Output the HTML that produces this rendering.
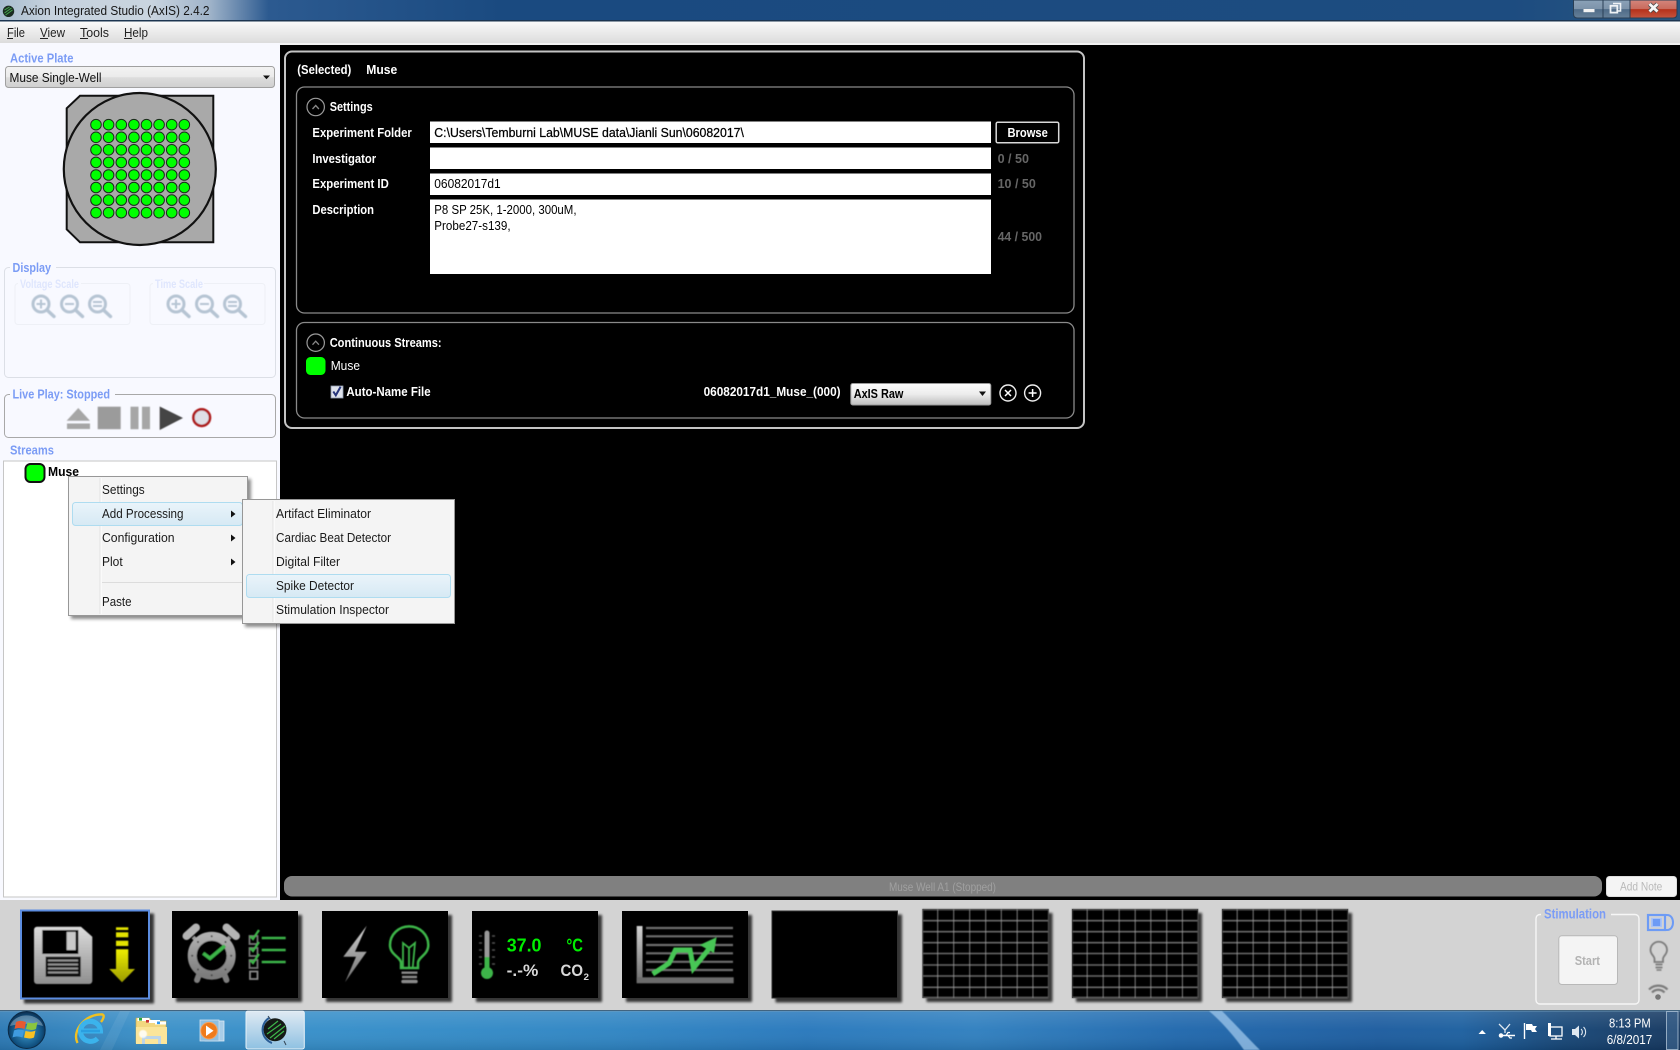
<!DOCTYPE html>
<html><head><meta charset="utf-8"><title>Axion Integrated Studio (AxIS) 2.4.2</title>
<style>
html,body{margin:0;padding:0;background:#000;width:1680px;height:1050px;overflow:hidden}
svg{display:block}
text{font-family:"Liberation Sans",Arial,sans-serif;font-size:13px;white-space:pre}
.b{font-weight:bold}
.w{fill:#fff;font-weight:bold}
.h{fill:#7b9cf5;font-weight:bold}
</style></head><body>
<svg width="1680" height="1050" viewBox="0 0 1680 1050" xmlns="http://www.w3.org/2000/svg">
<defs>
<linearGradient id="tb" x1="0" x2="1" y1="0" y2="0">
<stop offset="0" stop-color="#a8bccf"/><stop offset=".03" stop-color="#c6d2dd"/><stop offset=".09" stop-color="#c9d4df"/><stop offset=".125" stop-color="#9fb3c9"/><stop offset=".16" stop-color="#2c5a90"/><stop offset=".3" stop-color="#1a4a80"/><stop offset=".9" stop-color="#1d4c80"/><stop offset="1" stop-color="#29567f"/>
</linearGradient>
<linearGradient id="mn" x1="0" x2="0" y1="0" y2="1"><stop offset="0" stop-color="#fbfbfb"/><stop offset=".2" stop-color="#f3f3f3"/><stop offset="1" stop-color="#dcdcdc"/></linearGradient>
<linearGradient id="cb" x1="0" x2="0" y1="0" y2="1"><stop offset="0" stop-color="#f3f3f3"/><stop offset=".5" stop-color="#ebebeb"/><stop offset=".52" stop-color="#dddddd"/><stop offset="1" stop-color="#cfcfcf"/></linearGradient>
<linearGradient id="hl" x1="0" x2="0" y1="0" y2="1"><stop offset="0" stop-color="#eaf4fa"/><stop offset="1" stop-color="#d6e9f4"/></linearGradient>
<linearGradient id="task" x1="0" x2="1" y1="0" y2="0">
<stop offset="0" stop-color="#2a78b4"/><stop offset=".09" stop-color="#3a90c8"/><stop offset=".2" stop-color="#358ec9"/><stop offset=".36" stop-color="#2f85c3"/><stop offset=".48" stop-color="#2878bc"/><stop offset=".58" stop-color="#2f7fbf"/><stop offset=".7" stop-color="#2068ad"/><stop offset=".82" stop-color="#1c5c9f"/><stop offset=".87" stop-color="#1c5f9f"/><stop offset=".93" stop-color="#174778"/><stop offset="1" stop-color="#15375f"/>
</linearGradient>
<linearGradient id="sheen" x1="0" x2="0" y1="0" y2="1"><stop offset="0" stop-color="#fff" stop-opacity=".14"/><stop offset=".5" stop-color="#fff" stop-opacity=".03"/><stop offset="1" stop-color="#000" stop-opacity=".1"/></linearGradient>
<linearGradient id="tbtn" x1="0" x2="0" y1="0" y2="1"><stop offset="0" stop-color="#dfeaf3"/><stop offset="1" stop-color="#8fc1e2"/></linearGradient>
<linearGradient id="minb" x1="0" x2="0" y1="0" y2="1"><stop offset="0" stop-color="#8ba2b8"/><stop offset=".5" stop-color="#7d93aa"/><stop offset=".52" stop-color="#4f6b88"/><stop offset="1" stop-color="#678199"/></linearGradient>
<linearGradient id="clsb" x1="0" x2="0" y1="0" y2="1"><stop offset="0" stop-color="#d4867c"/><stop offset=".5" stop-color="#c96a5c"/><stop offset=".52" stop-color="#b5301a"/><stop offset="1" stop-color="#c5553f"/></linearGradient>
<linearGradient id="fl" x1="0" x2="0" y1="0" y2="1"><stop offset="0" stop-color="#dcdcdc"/><stop offset="1" stop-color="#8f8f8f"/></linearGradient>
<linearGradient id="ar" x1="0" x2="0" y1="0" y2="1"><stop offset="0" stop-color="#eeee00"/><stop offset="1" stop-color="#9c9c00"/></linearGradient>
<linearGradient id="gy" x1="0" x2="0" y1="0" y2="1"><stop offset="0" stop-color="#d2d2d2"/><stop offset="1" stop-color="#6e6e6e"/></linearGradient>
<linearGradient id="rg" x1="0" x2="0" y1="0" y2="1"><stop offset="0" stop-color="#b0b0b0"/><stop offset="1" stop-color="#7c7c7c"/></linearGradient>
<linearGradient id="axis" x1="0" x2="0" y1="0" y2="1"><stop offset="0" stop-color="#fdfdfd"/><stop offset=".5" stop-color="#ececec"/><stop offset="1" stop-color="#bdbdbd"/></linearGradient>
<radialGradient id="orb" cx=".5" cy=".55" r=".55"><stop offset="0" stop-color="#3d9bd0"/><stop offset=".75" stop-color="#10507f"/><stop offset="1" stop-color="#0c2c4c"/></radialGradient>
<filter id="sh" x="-10%" y="-10%" width="125%" height="125%"><feGaussianBlur in="SourceAlpha" stdDeviation="1.2"/><feOffset dx="4" dy="4"/><feComponentTransfer><feFuncA type="linear" slope=".75"/></feComponentTransfer><feMerge><feMergeNode/><feMergeNode in="SourceGraphic"/></feMerge></filter>
<filter id="msh" x="-5%" y="-5%" width="115%" height="115%"><feGaussianBlur in="SourceAlpha" stdDeviation="1.5"/><feOffset dx="3" dy="3"/><feComponentTransfer><feFuncA type="linear" slope=".45"/></feComponentTransfer><feMerge><feMergeNode/><feMergeNode in="SourceGraphic"/></feMerge></filter>
<filter id="bl"><feGaussianBlur stdDeviation=".5"/></filter>
<filter id="bl2" x="-10%" y="-10%" width="120%" height="120%"><feGaussianBlur stdDeviation=".4"/></filter>
<g id="row" fill="#00ff00" stroke="#1c2a1c" stroke-width="1"><circle cx="96" r="5.3"/><circle cx="108.6" r="5.3"/><circle cx="121.3" r="5.3"/><circle cx="133.9" r="5.3"/><circle cx="146.5" r="5.3"/><circle cx="159.1" r="5.3"/><circle cx="171.7" r="5.3"/><circle cx="184.3" r="5.3"/></g>
<g id="grid">
<rect x="922.5" y="909" width="126" height="89" fill="#000" filter="url(#sh)"/>
<g filter="url(#bl2)">
<path d="M922.5 909.5h126M922.5 920.7h126M922.5 931.7h126M922.5 942.7h126M922.5 953.5h126M922.5 965h126M922.5 976h126M922.5 987.3h126M922.5 997.5h126" stroke="#6a6a6a" stroke-width="1.6" fill="none"/>
<path d="M937.7 909v89M953.7 909v89M969.7 909v89M985.7 909v89M1001.3 909v89M1017.2 909v89M1032.9 909v89" stroke="#9a9a9a" stroke-width=".8" fill="none"/>
<path d="M922.8 909v89M1048.4 909v89" stroke="#555" stroke-width="1" fill="none"/>
</g>
</g>
<g id="zm" fill="none" stroke="#b6c4d3"><circle cx="0" cy="0" r="8" stroke-width="3"/><path d="M6 6l7 6.5" stroke-width="3.4" stroke-linecap="round"/></g>
</defs>

<rect width="1680" height="1050" fill="#000"/>
<!-- title bar -->
<rect width="1680" height="20" fill="url(#tb)"/>
<rect y="20" width="1680" height="1.5" fill="#1c3550"/>
<circle cx="8.5" cy="11.3" r="5.7" fill="#1b2b22"/><path d="M4.5 13l7-5M5.5 15l7-5M4.5 10l5-3" stroke="#44a84c" stroke-width="1"/>
<text x="21" y="15" textLength="188.5" lengthAdjust="spacingAndGlyphs" fill="#161616">Axion Integrated Studio (AxIS) 2.4.2</text>
<!-- window buttons -->
<path d="M1573.5 0v14q0 4 4 4h29V0z" fill="url(#minb)" stroke="#2a3f55"/>
<rect x="1603" y="0" width="27" height="18" fill="url(#minb)" stroke="#2a3f55"/>
<path d="M1630 0v18h43q4 0 4-4V0z" fill="url(#clsb)" stroke="#2a3f55"/>
<rect x="1583.5" y="9" width="11" height="3.2" fill="#f2f2f2"/>
<path d="M1613 3.5h7.5v7.5h-2.5" fill="none" stroke="#eef2f5" stroke-width="1.6"/><rect x="1610.5" y="5.8" width="6.8" height="6.8" fill="none" stroke="#eef2f5" stroke-width="1.8"/>
<path d="M1649.5 4l8 7.5M1657.5 4l-8 7.5" stroke="#4a4a4a" stroke-width="4.4"/>
<path d="M1649.5 4l8 7.5M1657.5 4l-8 7.5" stroke="#f6f6f6" stroke-width="2.8"/>
<!-- menu -->
<rect y="21.5" width="1680" height="22" fill="url(#mn)"/>
<g fill="#222">
<text x="7" y="37" textLength="18" lengthAdjust="spacingAndGlyphs">File</text>
<text x="40" y="37" textLength="25" lengthAdjust="spacingAndGlyphs">View</text>
<text x="80" y="37" textLength="29" lengthAdjust="spacingAndGlyphs">Tools</text>
<text x="124" y="37" textLength="24" lengthAdjust="spacingAndGlyphs">Help</text>
</g>
<path d="M7 38.5h6M40 38.5h8M80 38.5h8M124 38.5h8" stroke="#222" stroke-width="1"/>
<rect y="43" width="1680" height="2" fill="#f2f2f2"/>
<!-- left panel -->
<rect y="43" width="280" height="857" fill="#f8f9ff"/>
<text class="h" x="10" y="62.5" textLength="63.5" lengthAdjust="spacingAndGlyphs">Active Plate</text>
<rect x="5.5" y="66.5" width="269" height="21" rx="3" fill="url(#cb)" stroke="#a0a0a0"/>
<text x="9.5" y="82" textLength="92" lengthAdjust="spacingAndGlyphs" fill="#111">Muse Single-Well</text>
<path d="M263 75.5h7l-3.5 3.7z" fill="#111"/>
<!-- plate -->
<path d="M80 95.8h133.3v146.5H80l-13.3-13v-121z" fill="#a9a9a9" stroke="#111" stroke-width="2"/>
<circle cx="139.8" cy="169" r="76" fill="#a9a9a9" stroke="#111" stroke-width="2.2"/>
<use href="#row" y="124.7"/><use href="#row" y="137.3"/><use href="#row" y="149.8"/><use href="#row" y="162.4"/><use href="#row" y="175"/><use href="#row" y="187.5"/><use href="#row" y="200.1"/><use href="#row" y="212.7"/>
<!-- display -->
<rect x="4.5" y="267.5" width="271" height="110" rx="4" fill="none" stroke="#dcdfe6"/>
<rect x="10" y="262" width="46" height="10" fill="#f8f9ff"/>
<text class="h" x="12.5" y="272" textLength="38.5" lengthAdjust="spacingAndGlyphs">Display</text>
<rect x="15" y="283.5" width="115" height="41" rx="3" fill="none" stroke="#eef0f6"/>
<rect x="150" y="283.5" width="115" height="41" rx="3" fill="none" stroke="#eef0f6"/>
<rect x="18" y="279" width="63" height="9" fill="#f8f9ff"/><rect x="153" y="279" width="51" height="9" fill="#f8f9ff"/>
<text x="20" y="288" class="b" style="font-size:11.5px" fill="#dfe6fd" textLength="59" lengthAdjust="spacingAndGlyphs">Voltage Scale</text>
<text x="155" y="288" class="b" style="font-size:11.5px" fill="#dfe6fd" textLength="48" lengthAdjust="spacingAndGlyphs">Time Scale</text>
<g filter="url(#bl2)">
<use href="#zm" x="41" y="304"/><use href="#zm" x="69.5" y="304"/><use href="#zm" x="97.5" y="304"/>
<use href="#zm" x="176" y="304"/><use href="#zm" x="204.5" y="304"/><use href="#zm" x="232.5" y="304"/>
<path d="M36.5 304h9M41 299.5v9M65 304h9M93 302h9M93 306h9M171.5 304h9M176 299.5v9M200 304h9M228 302h9M228 306h9" stroke="#b6c4d3" stroke-width="2" fill="none"/>
</g>
<!-- live play -->
<rect x="4.5" y="394.5" width="271" height="43" rx="4" fill="none" stroke="#a8a8a8"/>
<rect x="10" y="389" width="105" height="10" fill="#f8f9ff"/>
<text class="h" x="12.5" y="398.5" textLength="97.5" lengthAdjust="spacingAndGlyphs">Live Play: Stopped</text>
<g filter="url(#bl)">
<path d="M78.3 408l11.7 12.8h-23.4z" fill="#a6a6a6"/><rect x="67" y="423.5" width="23" height="5.5" fill="#a6a6a6"/>
<rect x="97.7" y="406.7" width="23" height="22.5" fill="#9b9b9b"/>
<rect x="130.5" y="406.7" width="8" height="22.5" fill="#a6a6a6"/><rect x="142" y="406.7" width="8" height="22.5" fill="#a6a6a6"/>
<path d="M159.7 406.5L183 418l-23.3 12z" fill="#444"/>
<circle cx="201.7" cy="417.6" r="8.3" fill="#dfdfe6" stroke="#ad1c1c" stroke-width="2.6"/>
</g>
<text class="h" x="10" y="454.5" textLength="44" lengthAdjust="spacingAndGlyphs">Streams</text>
<!-- tree -->
<rect x="3.5" y="461" width="273" height="436" fill="#fff" stroke="#c6c6c6"/>
<rect x="25.5" y="464" width="19" height="18" rx="5" fill="#00ff00" stroke="#111" stroke-width="2"/>
<text x="48" y="476" class="b" fill="#000" textLength="31" lengthAdjust="spacingAndGlyphs">Muse</text>
<!-- context menu 1 -->
<g filter="url(#msh)"><rect x="68.5" y="476.5" width="179" height="139" fill="#f4f4f4" stroke="#979797"/></g>
<path d="M100 478v136" stroke="#e2e2e2"/><path d="M101 478v136" stroke="#fff"/>
<rect x="72.5" y="502.5" width="170" height="23" rx="3" fill="url(#hl)" stroke="#aedcf0"/>
<path d="M102 582.5h141" stroke="#dcdcdc"/>
<g fill="#1a1a1a">
<text x="102" y="494" textLength="42.7" lengthAdjust="spacingAndGlyphs">Settings</text>
<text x="102" y="518" textLength="81.5" lengthAdjust="spacingAndGlyphs">Add Processing</text>
<text x="102" y="542" textLength="72.5" lengthAdjust="spacingAndGlyphs">Configuration</text>
<text x="102" y="566" textLength="20.7" lengthAdjust="spacingAndGlyphs">Plot</text>
<text x="102" y="606" textLength="29.5" lengthAdjust="spacingAndGlyphs">Paste</text>
</g>
<path d="M231 510.5l4.5 3.5-4.5 3.5zM231 534.5l4.5 3.5-4.5 3.5zM231 558.5l4.5 3.5-4.5 3.5z" fill="#111"/>
<!-- submenu -->
<g filter="url(#msh)"><rect x="242.5" y="499.5" width="212" height="124" fill="#f4f4f4" stroke="#979797"/></g>
<path d="M273 501v121" stroke="#e2e2e2"/><path d="M274 501v121" stroke="#fff"/>
<rect x="246.5" y="574.5" width="204" height="23" rx="3" fill="url(#hl)" stroke="#aedcf0"/>
<g fill="#1a1a1a">
<text x="276" y="518" textLength="95" lengthAdjust="spacingAndGlyphs">Artifact Eliminator</text>
<text x="276" y="542" textLength="115" lengthAdjust="spacingAndGlyphs">Cardiac Beat Detector</text>
<text x="276" y="566" textLength="64" lengthAdjust="spacingAndGlyphs">Digital Filter</text>
<text x="276" y="590" textLength="78" lengthAdjust="spacingAndGlyphs">Spike Detector</text>
<text x="276" y="614" textLength="113" lengthAdjust="spacingAndGlyphs">Stimulation Inspector</text>
</g>
<!-- main panel -->
<rect x="285" y="51.5" width="799" height="376.5" rx="7" fill="#000" stroke="#c4c4c4" stroke-width="2"/>
<text class="w" x="297.3" y="74" textLength="54" lengthAdjust="spacingAndGlyphs">(Selected)</text>
<text class="w" x="366.3" y="74" textLength="31" lengthAdjust="spacingAndGlyphs">Muse</text>
<rect x="296.5" y="87" width="777.5" height="226" rx="8" fill="none" stroke="#8a8a8a" stroke-width="1.3"/>
<rect x="296.5" y="322.5" width="777.5" height="95.5" rx="8" fill="none" stroke="#8a8a8a" stroke-width="1.3"/>
<circle cx="315.7" cy="107" r="8.7" fill="none" stroke="#9a9a9a" stroke-width="1.2"/><path d="M312.5 109l3.2-3.5 3.2 3.5" fill="none" stroke="#888" stroke-width="1.3"/>
<circle cx="315.7" cy="342.7" r="8.7" fill="none" stroke="#9a9a9a" stroke-width="1.2"/><path d="M312.5 344.7l3.2-3.5 3.2 3.5" fill="none" stroke="#888" stroke-width="1.3"/>
<text class="w" x="329.7" y="111" textLength="43" lengthAdjust="spacingAndGlyphs">Settings</text>
<text class="w" x="312.4" y="137" textLength="99.4" lengthAdjust="spacingAndGlyphs">Experiment Folder</text>
<text class="w" x="312.4" y="163" textLength="63.8" lengthAdjust="spacingAndGlyphs">Investigator</text>
<text class="w" x="312.4" y="188" textLength="76.4" lengthAdjust="spacingAndGlyphs">Experiment ID</text>
<text class="w" x="312.4" y="214" textLength="61.6" lengthAdjust="spacingAndGlyphs">Description</text>
<rect x="430" y="121.5" width="561" height="21.5" fill="#fff"/>
<rect x="430" y="147.5" width="561" height="21.5" fill="#fff"/>
<rect x="430" y="173.5" width="561" height="21.5" fill="#fff"/>
<rect x="430" y="199.5" width="561" height="74.5" fill="#fff"/>
<text x="434.3" y="137" fill="#000" stroke="#000" stroke-width=".25" textLength="309.6" lengthAdjust="spacingAndGlyphs">C:\Users\Temburni Lab\MUSE data\Jianli Sun\06082017\</text>
<text x="434.3" y="188" fill="#000" textLength="66.4" lengthAdjust="spacingAndGlyphs">06082017d1</text>
<text x="434.3" y="214" fill="#000" textLength="142.2" lengthAdjust="spacingAndGlyphs">P8 SP 25K, 1-2000, 300uM,</text>
<text x="434.3" y="230" fill="#000" textLength="76.3" lengthAdjust="spacingAndGlyphs">Probe27-s139,</text>
<rect x="996.2" y="122.2" width="62.5" height="20.6" rx="1.5" fill="#000" stroke="#d8d8d8" stroke-width="1.5"/>
<text class="w" x="1007.5" y="137" textLength="40.3" lengthAdjust="spacingAndGlyphs">Browse</text>
<text x="997.6" y="163" textLength="31.4" lengthAdjust="spacingAndGlyphs" fill="#666" font-weight="bold">0 / 50</text>
<text x="997.6" y="188" textLength="38.2" lengthAdjust="spacingAndGlyphs" fill="#666" font-weight="bold">10 / 50</text>
<text x="997.6" y="241" textLength="44.4" lengthAdjust="spacingAndGlyphs" fill="#666" font-weight="bold">44 / 500</text>
<text class="w" x="329.7" y="347" textLength="111.9" lengthAdjust="spacingAndGlyphs">Continuous Streams:</text>
<rect x="306" y="357" width="19.5" height="18" rx="4.5" fill="#00ff00"/>
<text x="330.7" y="370" fill="#fff" textLength="29.3" lengthAdjust="spacingAndGlyphs">Muse</text>
<rect x="331" y="386" width="12" height="12" fill="#dfe3ec" stroke="#8f9ab0" stroke-width=".8"/>
<path d="M333.3 391.5l2.5 3.8 4.8-8.5" fill="none" stroke="#28367c" stroke-width="2"/>
<text class="w" x="346.4" y="396" textLength="84.2" lengthAdjust="spacingAndGlyphs">Auto-Name File</text>
<text class="w" x="703.6" y="396" textLength="137" lengthAdjust="spacingAndGlyphs">06082017d1_Muse_(000)</text>
<rect x="850.8" y="383.5" width="140" height="21.5" rx="2" fill="url(#axis)" stroke="#999"/>
<text x="853.7" y="398" fill="#000" font-weight="bold" textLength="49.7" lengthAdjust="spacingAndGlyphs">AxIS Raw</text>
<path d="M979 391.5h7l-3.5 4.5z" fill="#111"/>
<circle cx="1008" cy="393" r="8" fill="none" stroke="#eee" stroke-width="1.4"/><path d="M1005 390l6 6M1011 390l-6 6" stroke="#fff" stroke-width="1.5"/>
<circle cx="1032.6" cy="393" r="8" fill="none" stroke="#eee" stroke-width="1.4"/><path d="M1032.6 389v8M1028.6 393h8" stroke="#fff" stroke-width="1.5"/>
<!-- status -->
<rect x="284" y="876" width="1318" height="20.5" rx="8" fill="#808080"/>
<text x="889" y="891" style="font-size:12px" fill="#a0a0a0" textLength="107" lengthAdjust="spacingAndGlyphs">Muse Well A1 (Stopped)</text>
<rect x="1606.5" y="876.5" width="70" height="20" rx="3" fill="#f4f4f4" stroke="#dedede"/>
<text x="1620" y="890.5" style="font-size:12px" fill="#b9b9b9" textLength="42.3" lengthAdjust="spacingAndGlyphs">Add Note</text>
<!-- bottom bar -->
<rect y="900" width="1680" height="110" fill="#d3d3d3"/>
<!-- thumb 1 -->
<g filter="url(#sh)"><rect x="21" y="910.5" width="128" height="88" fill="#000" stroke="#5b8de0" stroke-width="2"/></g>
<g filter="url(#bl2)">
<path d="M37 926.7h44l11.3 10v44.3a3 3 0 0 1-3 3h-52.3a3 3 0 0 1-3-3v-51.3a3 3 0 0 1 3-3z" fill="url(#fl)"/>
<rect x="42.3" y="930" width="36" height="24" fill="#000"/><rect x="66.7" y="932" width="9" height="18" fill="#c9c9c9"/>
<rect x="45.7" y="956.7" width="35" height="20" fill="#111"/>
<path d="M48 960.5h30M48 964.5h30M48 968.5h30M48 972.5h30" stroke="#9a9a9a" stroke-width="1.8"/>
<rect x="116" y="927.3" width="12.3" height="2.7" fill="#e3e300"/><rect x="116" y="932.3" width="12.3" height="5" fill="#e3e300"/><rect x="116" y="940.7" width="12.3" height="5.3" fill="#e3e300"/>
<path d="M116 949.3h12.3V969h6.7l-13 13.3L109.3 969H116z" fill="url(#ar)"/>
</g>
<!-- thumb 2: alarm clock + checklist -->
<rect x="172" y="911" width="126" height="87" fill="#000" filter="url(#sh)"/>
<g filter="url(#bl2)">
<path d="M186.5 936l9.5-8.500M236 936l-9.500-8.500" stroke="#b4b4b4" stroke-width="8" stroke-linecap="round"/>
<path d="M193 937l3 3M230 937l-3 3" stroke="#999" stroke-width="4"/>
<path d="M198.500 976l-1.500 4M225 976l1.500 4" stroke="#7e7e7e" stroke-width="6" stroke-linecap="round"/>
<circle cx="211.7" cy="955.7" r="19.500" fill="#000" stroke="url(#rg)" stroke-width="9"/>
<g fill="#444"><circle cx="211.700" cy="936.200" r="1"/><circle cx="211.700" cy="975.200" r="1"/><circle cx="192.200" cy="955.700" r="1"/><circle cx="231.200" cy="955.700" r="1"/><circle cx="198" cy="942" r="1"/><circle cx="225.500" cy="942" r="1"/><circle cx="198" cy="969.500" r="1"/><circle cx="225.500" cy="969.500" r="1"/></g>
<path d="M203.300 953.300l6.700 5 15-12.600" fill="none" stroke="#3db54a" stroke-width="3.400"/>
<g fill="none" stroke="#777" stroke-width="1.800">
<rect x="249.500" y="936" width="8" height="8"/><rect x="249.500" y="948" width="8" height="8"/><rect x="249.500" y="960" width="8" height="8"/><rect x="250" y="971.500" width="7.500" height="7.500" stroke="#8a8a8a"/>
</g>
<path d="M250 936l3 3 6-9M250 948l3 3 6-9M250 960l3 3 6-9" fill="none" stroke="#3db54a" stroke-width="2.300"/>
<path d="M261.700 938h24M261.700 950h24M261.700 962h24" stroke="#3db54a" stroke-width="2.500"/>
</g>
<!-- thumb 3 -->
<rect x="322" y="911" width="126" height="87" fill="#000" filter="url(#sh)"/>
<g filter="url(#bl2)">
<path d="M366.700 925.700l-23.400 31h12.700L345 982.300l21.700-30.600H355z" fill="url(#gy)"/>
<path d="M401 968v-5c0-6-11-8-11-18a19 18.500 0 0 1 38.300 0c0 10-10.300 12-10.300 18v5z" fill="none" stroke="#3db54a" stroke-width="2.500"/>
<path d="M403 968v-25l6 5 6-5-2.300 25M409 948v20" fill="none" stroke="#3db54a" stroke-width="1.800"/>
<path d="M401.500 972.700h16M402 977h15" stroke="#8a8a8a" stroke-width="2.400"/><path d="M403 981.500h13" stroke="#8a8a8a" stroke-width="3.500" stroke-linecap="round"/>
</g>
<!-- thumb 4 -->
<rect x="472" y="911" width="126" height="87" fill="#000" filter="url(#sh)"/>
<g filter="url(#bl2)">
<path d="M487 964.500V933" stroke="#999" stroke-width="5" stroke-linecap="round"/>
<path d="M487 968v-11" stroke="#3db54a" stroke-width="5"/><circle cx="487" cy="973" r="6" fill="#3db54a"/>
<path d="M479 936h3M492 936h3M479 943h3M492 943h3M479 950h3M492 950h3M479 957h3M492 957h3M479 964h3M492 964h3" stroke="#555" stroke-width="1.500"/>
</g>
<text x="506.700" y="951.500" class="b" style="font-size:18px" fill="#00ee00" textLength="34.800" lengthAdjust="spacingAndGlyphs">37.0</text>
<text x="566.400" y="951.500" class="b" style="font-size:18px" fill="#00ee00" textLength="16.600" lengthAdjust="spacingAndGlyphs">°C</text>
<text x="506.700" y="976" class="b" style="font-size:17px" fill="#d8d8d8" textLength="31.600" lengthAdjust="spacingAndGlyphs">-.-%</text>
<text x="560.500" y="976" class="b" style="font-size:17px" fill="#d8d8d8" textLength="22.500" lengthAdjust="spacingAndGlyphs">CO</text>
<text x="583.500" y="980" class="b" style="font-size:9px" fill="#d8d8d8" textLength="5.500" lengthAdjust="spacingAndGlyphs">2</text>
<!-- thumb 5: chart -->
<rect x="622" y="911" width="126" height="87" fill="#000" filter="url(#sh)"/>
<g filter="url(#bl2)">
<rect x="636.700" y="926" width="5.800" height="57" fill="url(#gy)"/>
<rect x="636.700" y="977.300" width="97" height="6" fill="#6c6c6c"/>
<path d="M646 928h87M646 936.300h87M646 945h87M646 953.300h87M646 961.800h87M646 970h87" stroke="#6e6e6e" stroke-width="2.200"/>
<path d="M652.700 974L669 963.300 675.400 950H690l3.400 18.300 16-20" fill="none" stroke="#46c654" stroke-width="5"/>
<path d="M716.600 937.300L699.700 945 714 953z" fill="#46c654"/>
</g>
<!-- thumb 6 -->
<rect x="772" y="911" width="125.500" height="87" fill="#000" stroke="#333" filter="url(#sh)"/>
<!-- grids -->
<use href="#grid"/><use href="#grid" x="149.500"/><use href="#grid" x="299.500"/>
<!-- stimulation -->
<rect x="1536" y="914.500" width="103" height="89.500" rx="4" fill="none" stroke="#f6f6f6" stroke-width="1.400"/>
<rect x="1541" y="910" width="70" height="9" fill="#d3d3d3"/>
<text class="h" x="1544" y="918.500" textLength="62" lengthAdjust="spacingAndGlyphs" style="font-size:13.500px">Stimulation</text>
<rect x="1558.800" y="935.800" width="58.700" height="48.700" rx="3" fill="#f4f4f4" stroke="#b8b8b8"/>
<text x="1574.700" y="965" class="b" fill="#b3b3b3" textLength="25.300" lengthAdjust="spacingAndGlyphs">Start</text>
<!-- right icons -->
<path d="M1665 915h2c4 0 6 3.500 6 7.500s-2 7.500-6 7.500h-2" fill="none" stroke="#6d9bf5" stroke-width="2"/>
<rect x="1648" y="915" width="17" height="15" fill="none" stroke="#6d9bf5" stroke-width="2.200"/>
<rect x="1651" y="917.800" width="11" height="9.400" fill="#a9c3f8"/><rect x="1652.800" y="919" width="7.400" height="7" fill="#6d9bf5"/>
<g fill="none" stroke="#7b7b7b" filter="url(#bl2)">
<path d="M1654.500 962v-3c0-3-4-4.500-4-9a8 8 0 0 1 16.500 0c0 4.500-4 6-4 9v3z" stroke-width="1.800"/>
<path d="M1655.500 964.500h7M1655.500 967.500h7" stroke-width="1.800"/><path d="M1656.500 970h5" stroke-width="1.500"/>
<path d="M1649 989.500a13 13 0 0 1 18.500 0M1652 992.500a8.500 8.500 0 0 1 12.500 0" stroke-width="2.200"/>
</g>
<circle cx="1658" cy="997" r="2.800" fill="#777"/>
<!-- taskbar -->
<rect y="1010" width="1680" height="40" fill="url(#task)"/>
<rect y="1010" width="1680" height="40" fill="url(#sheen)"/>
<rect y="1010" width="1680" height="1.200" fill="#1d3a54"/>
<path d="M0 1011h1680" stroke="#7eaac9" stroke-width=".7"/>
<path d="M1209 1011h13c12 12 26 27 38 39h-16c-10-14-22-28-35-39z" fill="#a6cdf0" opacity=".7" filter="url(#bl)"/>
<path d="M100 1050l20-39h10l-18 39z" fill="#fff" opacity=".07"/>
<!-- start orb -->
<circle cx="26.700" cy="1030" r="18.500" fill="url(#orb)" stroke="#0b2b47"/>
<path d="M10 1026a17 14 0 0 1 33 0c-10-3-22-3-33 0z" fill="#fff" opacity=".3"/>
<path d="M16 1022c4-2 7-1 10 0l-1.500 7c-3-1-6-1.500-10 0z" fill="#e85a30"/>
<path d="M27.500 1022.500c4 1 7 1 10-.5l-1.500 7c-3 1.500-6 1-10 0z" fill="#8bc63e"/>
<path d="M14 1030.500c4-1.500 7-1 10 0l-1.500 7c-3-1-6-1.500-10 0z" fill="#3f9be0"/>
<path d="M25.500 1031c4 1 7 1 10-.5l-1.500 7c-3 1.500-6 1-10 0z" fill="#f8c124"/>
<!-- IE -->
<path d="M77.500 1043C71 1030 87 1013 102.500 1014.500c2.500 1 .5 5-1.500 7.500" fill="none" stroke="#f0c020" stroke-width="2.400"/>
<path d="M80.500 1031h20a10 10 0 1 0-3 7.500" fill="none" stroke="#3bb3ec" stroke-width="5"/>
<path d="M81 1031h19" stroke="#2a9ee0" stroke-width="2.400"/>
<!-- explorer -->
<path d="M136 1018h13l3 3h14v22h-30z" fill="#f2d77f" stroke="#c9a948" stroke-width=".6"/>
<rect x="137.500" y="1018" width="12" height="3" fill="#fff"/><rect x="139" y="1018" width="3" height="2.600" fill="#29a839"/>
<rect x="148" y="1020" width="12" height="3" fill="#fff"/><rect x="146" y="1020" width="3" height="2.600" fill="#c33"/>
<rect x="155" y="1021.500" width="11" height="3" fill="#fff"/><rect x="157" y="1021.500" width="3" height="2.600" fill="#39e"/>
<path d="M136 1027h31v17h-31z" fill="#fbe59a"/>
<path d="M142 1044v-8h19v8h-3v-5h-13v5z" fill="#bdd5e8"/>
<circle cx="143" cy="1034" r="4" fill="#fff" opacity=".85" filter="url(#bl)"/>
<!-- WMP -->
<rect x="205" y="1021" width="19" height="20" fill="#a8cde8" stroke="#dbe9f4" stroke-width=".8"/>
<rect x="200" y="1020" width="19" height="21" fill="#8ebfe0" stroke="#cfe2f0" stroke-width=".8"/>
<circle cx="209" cy="1030.700" r="8.300" fill="#ee7b1c" stroke="#f5a25e"/>
<path d="M206 1025.500l7.500 5.200-7.500 5.300z" fill="#fff"/>
<!-- active button -->
<rect x="246" y="1011" width="58.300" height="38" rx="2" fill="url(#tbtn)" stroke="#e8f2f8"/>
<circle cx="275" cy="1029.700" r="11.500" fill="#151a16"/>
<path d="M267 1034l14-10M268 1029l10-8M270 1038l15-12M274 1039l10-8" stroke="#3db54a" stroke-width="1.200"/>
<path d="M269 1018a14 14 0 0 0 3 25" fill="none" stroke="#2a5d96" stroke-width="2"/>
<path d="M268 1016l3 4M284 1041l2 4" stroke="#345" stroke-width="1"/>
<!-- tray -->
<path d="M1478.500 1034l3.700-4 3.700 4z" fill="#fff"/>
<g fill="none" stroke="#fff" stroke-width="1.300">
<path d="M1499 1024l6 6 5-6M1505 1030v3" stroke="#dfe8f0"/>
<path d="M1502 1035.500h13" stroke-width="1.500"/><circle cx="1501" cy="1035.500" r="1.600" fill="#fff"/><path d="M1506 1035.500l2-3h2M1508 1035.500l2 2.500h2"/>
</g>
<path d="M1524.500 1023v16" stroke="#fff" stroke-width="1.400"/><path d="M1526 1024h6l1 2h4l-2 3 2 3h-5l-1-2h-5z" fill="#fff"/>
<g fill="none" stroke="#fff" stroke-width="1.300"><rect x="1550" y="1027" width="12" height="9"/><path d="M1551 1039h11M1556 1036v3"/></g>
<rect x="1548" y="1023" width="3" height="13" fill="#fff"/>
<path d="M1572 1029h3l4-3.500v13l-4-3.500h-3z" fill="#dfe8f0"/><path d="M1581 1029a4 4 0 0 1 0 6M1583.500 1027a7 7 0 0 1 0 10" fill="none" stroke="#dfe8f0" stroke-width="1.100"/>
<text x="1609" y="1027.500" fill="#fff" textLength="41.700" lengthAdjust="spacingAndGlyphs">8:13 PM</text>
<text x="1606.700" y="1044" fill="#fff" textLength="45.600" lengthAdjust="spacingAndGlyphs">6/8/2017</text>
<rect x="1666.500" y="1011.500" width="11.500" height="38" fill="#46709a" fill-opacity=".55" stroke="#9fb6cc" stroke-width=".9"/>
</svg>
</body></html>
